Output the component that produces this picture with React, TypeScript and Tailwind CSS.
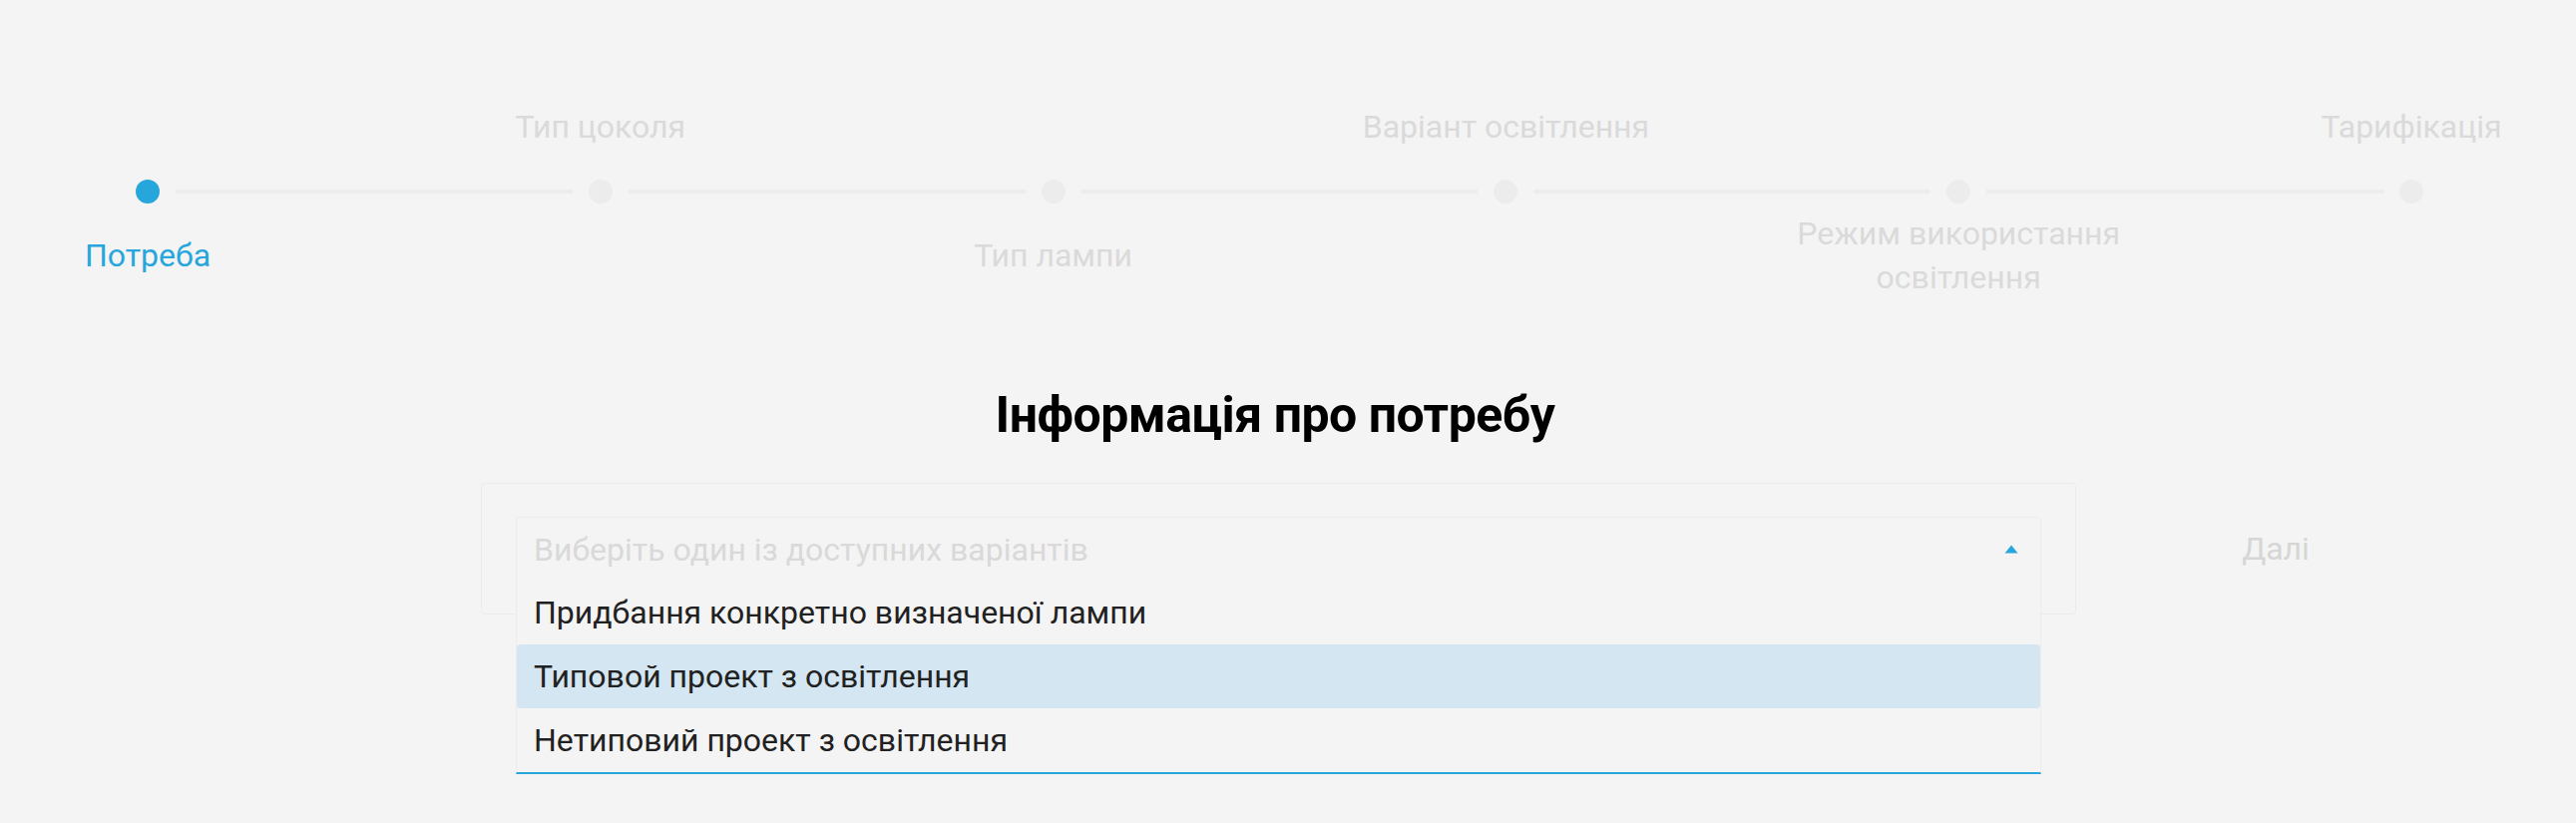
const steps = [
  { label: 'Потреба', top: false, active: true },
  { label: 'Тип цоколя', top: true, active: false },
  { label: 'Тип лампи', top: false, active: false },
  { label: 'Варіант освітлення', top: true, active: false },
  { label: 'Режим використання освітлення', top: false, active: false },
  { label: 'Тарифікація', top: true, active: false },
]

const options = [
  'Придбання конкретно визначеної лампи',
  'Типовой проект з освітлення',
  'Нетиповий проект з освітлення',
]

const StepLabel = ({ text, active }: { text: string; active: boolean }) => (
  <div
    className={`text-center text-[32px] leading-[44px] ${
      text.length > 20 ? 'w-[340px]' : 'whitespace-nowrap'
    } ${active ? 'text-[#27a6dc]' : 'text-[#dadada]'}`}
  >
    {text}
  </div>
)

const Stepper = () => (
  <div className="flex items-start pl-[136px] pr-[153px]">
    {steps.map((step, i) => (
      <div key={step.label} className="contents">
        {i > 0 && <div className="mx-4 mt-[108px] h-1 flex-1 bg-[#ececec]" />}
        <div className="flex w-6 shrink-0 flex-col items-center">
          <div className="flex h-[90px] items-center">
            {step.top && <StepLabel text={step.label} active={step.active} />}
          </div>
          <div
            className={`mt-2 h-6 w-6 rounded-full ${step.active ? 'bg-[#27a6dc]' : 'bg-[#ececec]'}`}
          />
          <div className="mt-[7px] flex h-[90px] items-center">
            {!step.top && <StepLabel text={step.label} active={step.active} />}
          </div>
        </div>
      </div>
    ))}
  </div>
)

const App = () => {
  const selected = 1

  return (
    <div className="h-[825px] overflow-hidden bg-[#f4f4f4] pt-[82px] font-['Roboto',sans-serif]">
      <Stepper />

      <h2 className="mt-[85px] pr-[26px] text-center text-[50px] leading-[60px] font-bold tracking-[-0.01em] text-black">
        Інформація про потребу
      </h2>

      <div className="mt-[38px] flex pl-[482px]">
        <div className="h-[132px] w-[1599px] rounded border border-[#ebebeb] px-[34px] py-[33px]">
          <div className="relative flex h-16 items-center justify-between rounded-t-sm border-x border-t border-[#ececec] pr-[22px] pl-[17px]">
            <span className="text-[32px] text-[#d9d9d9]">Виберіть один із доступних варіантів</span>
            <svg width="14" height="9" viewBox="0 0 14 9">
              <path d="M7 0.5 L13.5 8.5 H0.5 Z" fill="#27a6dc" />
            </svg>
            <div className="absolute top-full -right-px -left-px z-10 border-x border-b-2 border-x-[#ececec] border-b-[#27a6dc] bg-[#f4f4f4]">
              {options.map((opt, i) => (
                <div
                  key={opt}
                  className={`flex h-16 items-center rounded-sm pl-[17px] text-[32px] text-[#212121] ${
                    i === selected ? 'bg-[#d4e6f1]' : ''
                  }`}
                >
                  {opt}
                </div>
              ))}
            </div>
          </div>
        </div>
        <button className="flex h-[132px] w-[400px] items-center justify-center text-[32px] text-[#d6d6d6]">
          Далі
        </button>
      </div>
    </div>
  )
}

export default App
